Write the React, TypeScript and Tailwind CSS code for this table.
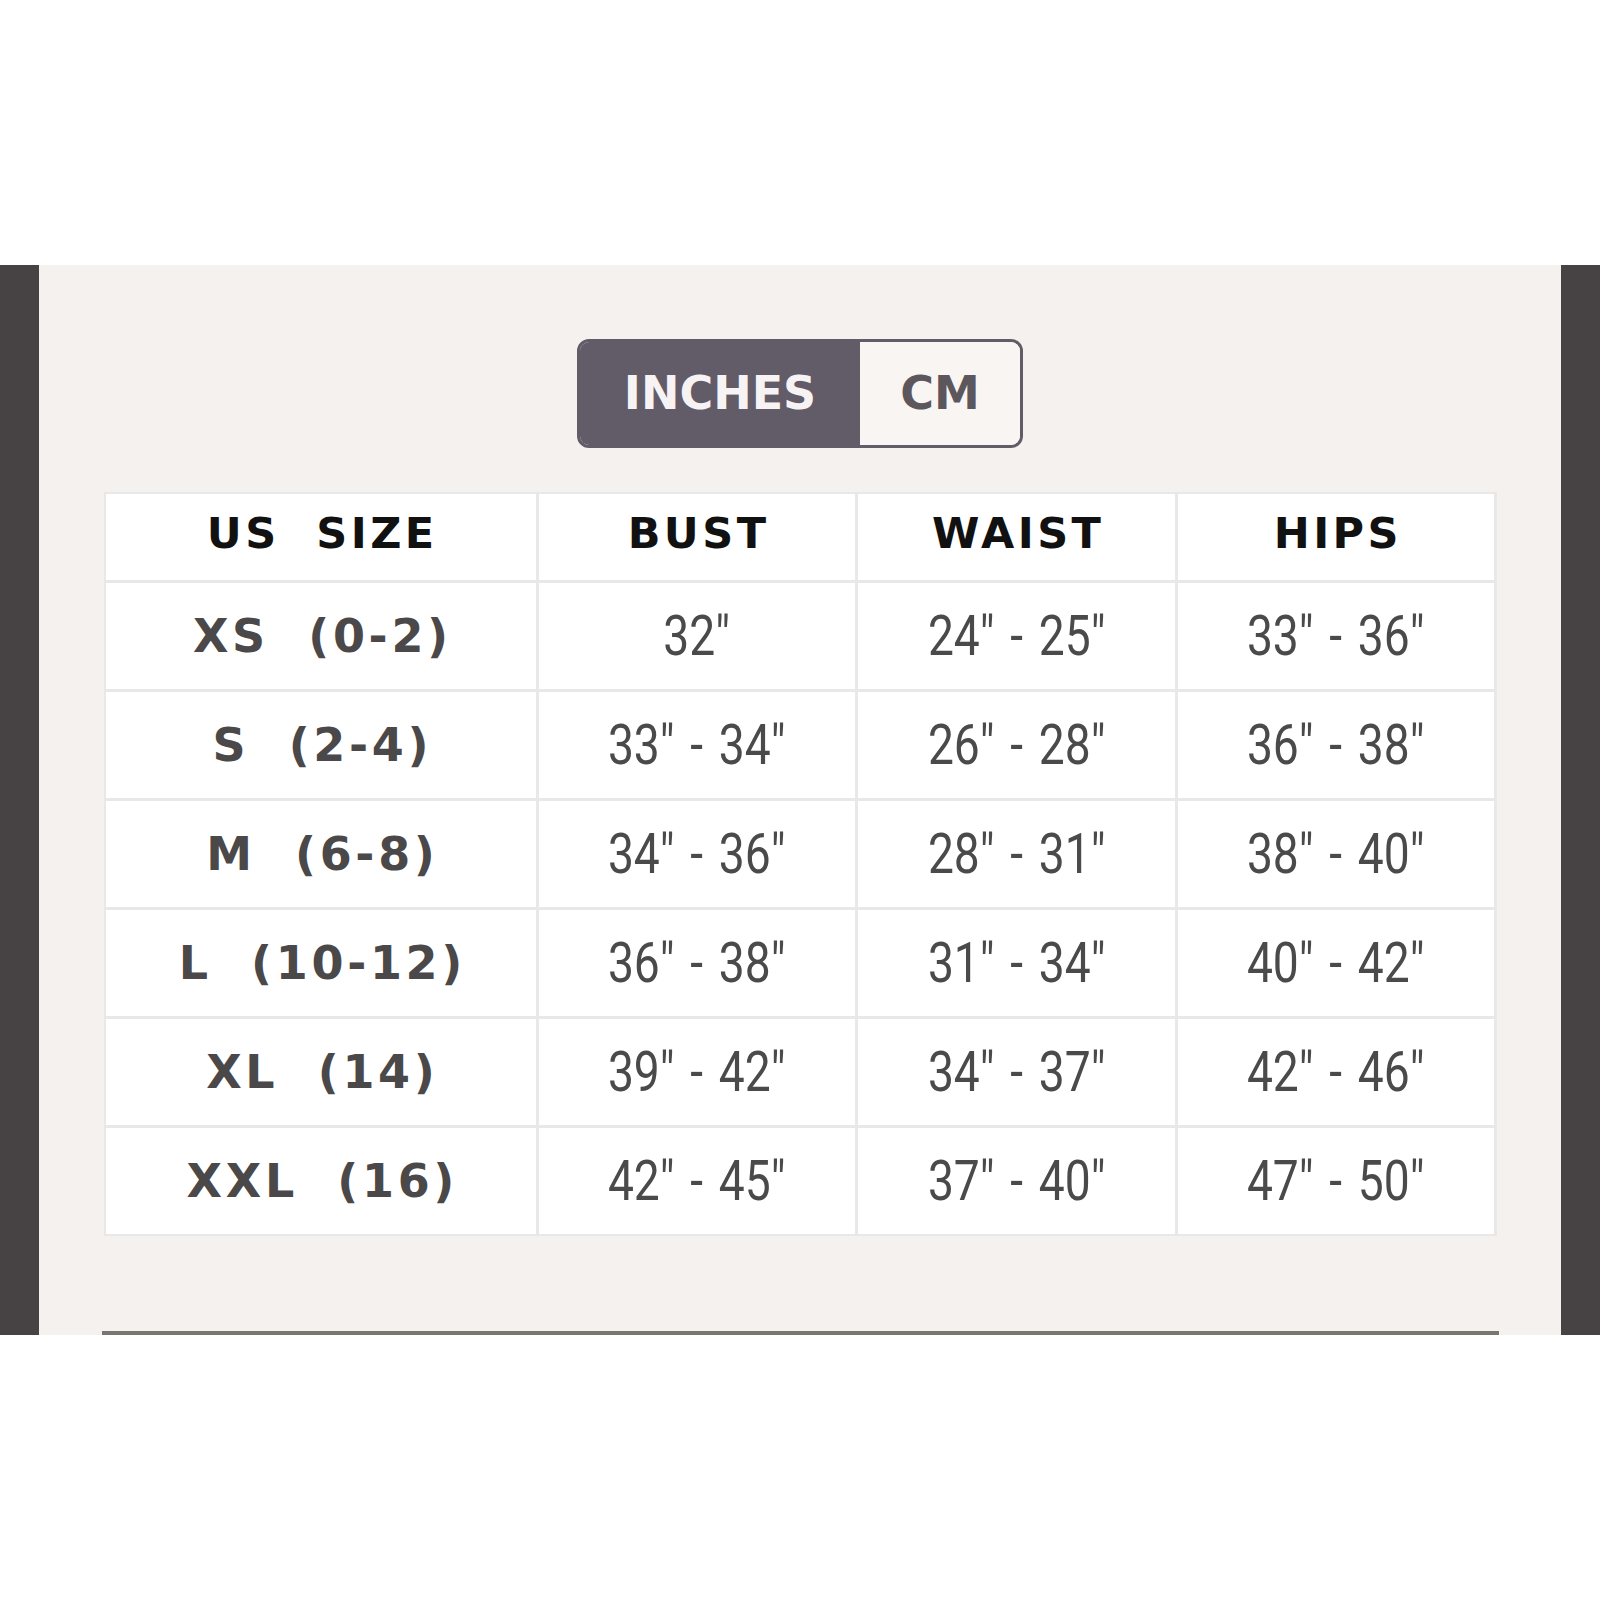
import React from 'react'

const rows = [
  { size: 'XS', range: '(0-2)', bust: '32"', waist: '24" - 25"', hips: '33" - 36"' },
  { size: 'S', range: '(2-4)', bust: '33" - 34"', waist: '26" - 28"', hips: '36" - 38"' },
  { size: 'M', range: '(6-8)', bust: '34" - 36"', waist: '28" - 31"', hips: '38" - 40"' },
  { size: 'L', range: '(10-12)', bust: '36" - 38"', waist: '31" - 34"', hips: '40" - 42"' },
  { size: 'XL', range: '(14)', bust: '39" - 42"', waist: '34" - 37"', hips: '42" - 46"' },
  { size: 'XXL', range: '(16)', bust: '42" - 45"', waist: '37" - 40"', hips: '47" - 50"' },
]

const geo = "font-['DejaVu_Sans',sans-serif] font-bold"

export default function App() {
  return (
    <div className="w-full h-[1600px] bg-white flex flex-col">
      <div className="h-[265px]" />

      <div className="flex h-[1070px]">
        <div className="w-[39px] bg-[#474344]" />

        {/* Chart panel */}
        <div className="flex-1 bg-[#f5f1ee] flex flex-col items-center pt-[74px]">
          {/* Unit toggle */}
          <div className="w-[446px] h-[109px] flex rounded-[12px] border-[3px] border-[#625b68] overflow-hidden">
            <div className={`w-[280px] bg-[#625b68] flex items-center justify-center text-[46px] text-[#f7f3f5] ${geo}`}>
              INCHES
            </div>
            <div className={`flex-1 bg-[#f8f5f3] flex items-center justify-center text-[46px] text-[#5c565d] ${geo}`}>
              CM
            </div>
          </div>

          {/* Size table */}
          <div className="mt-[44px] grid grid-cols-[430px_1fr_1fr_1fr] grid-rows-[86px_repeat(6,106px)] gap-[3px] border-[2px] border-[#e8e8e8] bg-[#e8e8e8] w-[1393px]">
            {['US  SIZE', 'BUST', 'WAIST', 'HIPS'].map(h => (
              <div key={h} className="bg-white flex items-center justify-center pb-[8px]">
                <span className={`pl-[0.08em] text-[43px] tracking-[0.08em] text-[#111] whitespace-pre ${geo}`}>{h}</span>
              </div>
            ))}
            {rows.map(r => (
              <React.Fragment key={r.size}>
                <div className="bg-white flex items-center justify-center">
                  <span className={`pl-[0.08em] text-[46px] tracking-[0.08em] text-[#4a4849] whitespace-pre ${geo}`}>
                    {`${r.size}  ${r.range}`}
                  </span>
                </div>
                {[r.bust, r.waist, r.hips].map((v, i) => (
                  <div key={i} className="bg-white flex items-center justify-center">
                    <span className="inline-block scale-x-[0.84] text-[55px] [word-spacing:5px] text-[#4b4a4b] whitespace-pre font-['Roboto',sans-serif] font-normal">
                      {v}
                    </span>
                  </div>
                ))}
              </React.Fragment>
            ))}
          </div>

          <div className="mt-auto w-[1397px] h-[4px] bg-[#7a756f]" />
        </div>

        <div className="w-[39px] bg-[#474344]" />
      </div>
    </div>
  )
}
